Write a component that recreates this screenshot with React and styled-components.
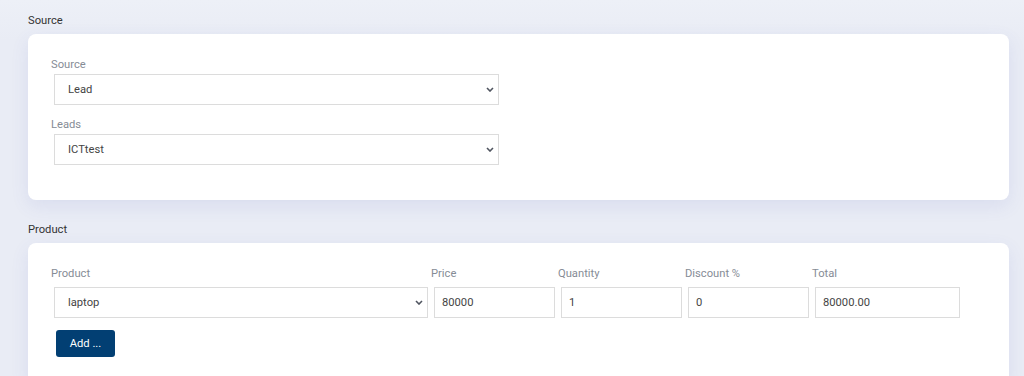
import React from "react";
import styled, { createGlobalStyle } from "styled-components";

const GlobalStyle = createGlobalStyle`
  body {
    margin: 0;
    background: #e9ecf5;
    font-family: Roboto, "Liberation Sans", sans-serif;
    font-size: 11.2px;
    color: #333;
  }
`;

const chevron =
  "url(\"data:image/svg+xml,%3Csvg xmlns='http://www.w3.org/2000/svg' width='8' height='5' viewBox='0 0 8 5'%3E%3Cpath d='M1 1l3 3 3-3' fill='none' stroke='%23505560' stroke-width='1.6'/%3E%3C/svg%3E\")";

const Page = styled.div`
  padding: 13px 15px 0 28px;
  background: linear-gradient(#edf0f7, #e9ecf5 40px);
  min-height: 376px;
  box-sizing: border-box;
`;

const SectionTitle = styled.div`
  line-height: 16px;
  color: #333;
  margin-bottom: 5px;
`;

const Card = styled.div`
  background: #fff;
  border-radius: 8px;
  padding: 23px 23px ${(p) => p.$bottom || 35}px;
  box-shadow: 0 6px 18px rgba(80, 90, 190, 0.1);
  margin-bottom: 22px;
`;

const Row = styled.div`
  display: flex;
`;

const Field = styled.div`
  width: ${(p) => p.$width}px;
  margin-bottom: ${(p) => p.$gap || 0}px;
`;

const Label = styled.label`
  display: block;
  line-height: 16px;
  color: #868c96;
`;

const Select = styled.select`
  display: block;
  width: calc(100% - 6px);
  height: 31px;
  margin: ${(p) => p.$top || 1}px 3px 0;
  padding: 0 20px 0 13px;
  border: 1px solid #dcdcdc;
  border-radius: 0;
  appearance: none;
  background: #fff ${chevron} no-repeat right 4px center / 8px 5px;
  font-family: inherit;
  font-size: 11.2px;
  color: #444;
  outline: none;
`;

const Input = styled.input`
  display: block;
  box-sizing: border-box;
  width: calc(100% - 6px);
  height: 31px;
  margin: 5px 3px 0;
  padding: 0 7px;
  border: 1px solid #dcdcdc;
  background: #fff;
  font-family: inherit;
  font-size: 11.2px;
  color: #444;
  outline: none;
`;

const AddButton = styled.button`
  margin: 12px 0 0 5px;
  width: 59px;
  height: 27px;
  border: none;
  border-radius: 3px;
  background: #023f73;
  color: #fff;
  font-family: inherit;
  font-size: 11.2px;
  cursor: pointer;
`;

const productFields = [
  { label: "Price", value: "80000", width: 127 },
  { label: "Quantity", value: "1", width: 127 },
  { label: "Discount %", value: "0", width: 127 },
  { label: "Total", value: "80000.00", width: 151 },
];

export default function App() {
  return (
    <>
      <GlobalStyle />
      <Page>
        <SectionTitle>Source</SectionTitle>
        <Card>
          <Field $width={451} $gap={12}>
            <Label>Source</Label>
            <Select defaultValue="Lead">
              <option>Lead</option>
              <option>Customer</option>
            </Select>
          </Field>
          <Field $width={451}>
            <Label>Leads</Label>
            <Select defaultValue="ICTtest">
              <option>ICTtest</option>
            </Select>
          </Field>
        </Card>

        <SectionTitle>Product</SectionTitle>
        <Card $bottom={30}>
          <Row>
            <Field $width={380}>
              <Label>Product</Label>
              <Select defaultValue="laptop" $top={5}>
                <option>laptop</option>
              </Select>
            </Field>
            {productFields.map((f) => (
              <Field key={f.label} $width={f.width}>
                <Label>{f.label}</Label>
                <Input defaultValue={f.value} />
              </Field>
            ))}
          </Row>
          <AddButton>Add ...</AddButton>
        </Card>
      </Page>
    </>
  );
}
